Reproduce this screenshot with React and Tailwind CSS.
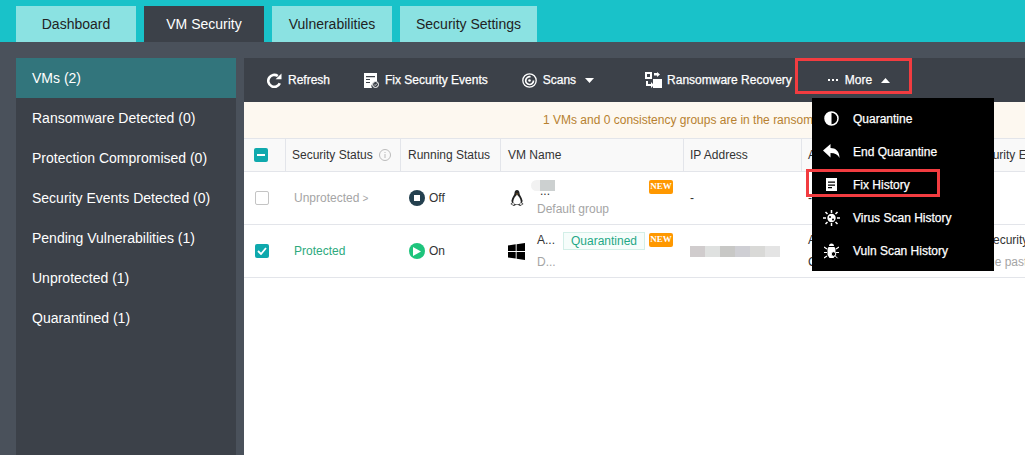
const tabs = ['Dashboard', 'VM Security', 'Vulnerabilities', 'Security Settings']
const sideItems = ['VMs (2)', 'Ransomware Detected (0)', 'Protection Compromised (0)', 'Security Events Detected (0)', 'Pending Vulnerabilities (1)', 'Unprotected (1)', 'Quarantined (1)']
const ipBlur = ['bg-[#d0cccd]', 'bg-[#dfe1e0]', 'bg-[#c8c8c6]', 'bg-[#cfcfd4]', 'bg-[#d9d9d7]', 'bg-[#e4e4e4]']

const Caret = ({ up }) => (
  <svg width="9" height="5" viewBox="0 0 9 5" className="ml-[9px]">
    <path d={up ? 'M4.5 0L9 5H0z' : 'M0 0h9L4.5 5z'} fill="#fff" />
  </svg>
)

const RefreshIcon = () => (
  <svg width="15" height="15" viewBox="0 0 15 15" fill="none">
    <path d="M12.8 10.2A6 6 0 1 1 10.8 3" stroke="#fff" strokeWidth="2.6" />
    <path d="M8.600 6.200h5.900V.4z" fill="#fff" />
  </svg>
)

const FixIcon = () => (
  <svg width="15" height="15" viewBox="0 0 15 15">
    <path d="M0 0h13v8.500a4.500 4.500 0 0 0-5 6.500H0z" fill="#fff" />
    <path d="M2 3h9v1.300H2zM2 6h4v1H2zM2 9h4v1H2z" fill="#3c4149" />
    <circle cx="11.500" cy="11.500" r="3" fill="none" stroke="#fff" />
    <path d="M10.200 11.500l1 1 1.700-1.800" fill="none" stroke="#fff" strokeWidth=".8" />
  </svg>
)

const ScanIcon = () => (
  <svg width="15" height="15" viewBox="0 0 15 15" fill="none" stroke="#fff">
    <circle cx="7.500" cy="7.500" r="6.700" strokeWidth="1.300" />
    <path d="M8.500 3.800a3.900 3.900 0 1 0 3 3.700" strokeWidth="1.700" />
    <circle cx="7.500" cy="7.500" r="1.300" fill="#fff" stroke="none" />
  </svg>
)

const RecoveryIcon = () => (
  <svg width="17" height="16" viewBox="0 0 17 16">
    <path d="M0 0h7v7H0z" fill="#fff" />
    <path d="M2 2h3v3H2z" fill="#3c4149" />
    <path d="M8 7h9v9H8z" fill="#fff" />
    <path d="M1 9h2v3h3v-2l3 3-3 3v-2H1z" fill="#fff" />
    <path d="M9 1h3V0l3 2.500L12 5V3.500H9z" fill="#fff" />
  </svg>
)

const PenguinIcon = () => (
  <svg width="14" height="16" viewBox="0 0 14 16">
    <path d="M7 0c1.700 0 2.500 1.400 2.500 3.200 0 1.800 2.400 4 3 7.300.2 1-.2 1.500-.7 1.700L13.500 14l-3.300 2-2-1H5.800l-2 1L.5 14l1.700-1.800c-.5-.2-.9-.8-.7-1.700.6-3.300 3-5.500 3-7.300C4.500 1.400 5.300 0 7 0z" fill="#222" />
    <path d="M7 4.800c1.400 1.200 3.700 4 3.700 6.700 0 1.900-1.700 3-3.700 3s-3.700-1.100-3.700-3C3.300 8.800 5.600 6 7 4.800z" fill="#fff" />
    <path d="M5.600 3.200L7 4l1.400-.8L7 4.700z" fill="#e9a23b" />
    <path d="M1.200 14l2.200-1.700 1 2.100-.9.800zM12.800 14l-2.200-1.700-1 2.100.9.800z" fill="#d8d8d8" />
  </svg>
)

const WindowsIcon = () => (
  <svg width="17" height="17" viewBox="0 0 17 17">
    <path d="M0 2.400l7.700-1.100v6.600H0zM8.600 1.200L17 0v7.900H8.600zM0 8.900h7.700v6.700L0 14.600zM8.600 8.900H17V17l-8.400-1.200z" fill="#000" />
  </svg>
)

const menu = [
  {
    label: 'Quarantine',
    icon: (
      <svg width="15" height="15" viewBox="0 0 15 15">
        <circle cx="7.500" cy="7.500" r="6.500" fill="#000" stroke="#fff" strokeWidth="1.500" />
        <path d="M7.500 1a6.500 6.500 0 0 0 0 13z" fill="#fff" />
      </svg>
    ),
  },
  {
    label: 'End Quarantine',
    icon: (
      <svg width="17" height="15" viewBox="0 0 17 15">
        <path d="M7.500 0v4c5 0 9 3 9 10-1.600-3.500-4.500-5-9-5v4.500L0 6.500z" fill="#fff" />
      </svg>
    ),
  },
  {
    label: 'Fix History',
    icon: (
      <svg width="17" height="13" viewBox="0 0 17 13">
        <path d="M3 0h11v13H3z" fill="#fff" />
        <path d="M5 3.500h7v1.200H5zM5 6.500h7v1.200H5zM5 9h4v1.200H5z" fill="#000" />
      </svg>
    ),
  },
  {
    label: 'Virus Scan History',
    icon: (
      <svg width="17" height="16" viewBox="0 0 17 16">
        <circle cx="8.500" cy="8" r="4.200" fill="#fff" />
        <path d="M8.500 0v3M8.500 13v3M0 8h3M14 8h3M2.500 2l2 2M14.500 2l-2 2M2.500 14l2-2M14.500 14l-2-2" stroke="#fff" strokeWidth="1.500" />
        <circle cx="7" cy="7" r="1" fill="#000" />
        <circle cx="10" cy="9.500" r="1" fill="#000" />
      </svg>
    ),
  },
  {
    label: 'Vuln Scan History',
    icon: (
      <svg width="15" height="16" viewBox="0 0 15 16">
        <path d="M4.500 4h6l1 2v6l-2 3h-4l-2-3V6zM5 3a2.500 2.500 0 0 1 5 0z" fill="#fff" />
        <path d="M3 6L0 4M12 6l3-2M3 9.500H0M12 9.500h3M3 13l-3 2" stroke="#fff" strokeWidth="1.200" />
        <circle cx="9.500" cy="11" r="2.300" fill="#000" stroke="#fff" />
        <path d="M11 12.700l2.500 2.500" stroke="#fff" />
      </svg>
    ),
  },
]

const HeadCell = ({ className, children }) => (
  <div className={`flex items-center border-r border-[#e3e5ea] text-[12px] text-[#333] whitespace-nowrap ${className}`}>{children}</div>
)

const NewBadge = () => (
  <span className="absolute left-[148px] top-[8px] flex h-[14px] w-6 items-center justify-center rounded-[2px] bg-[#ff9800] font-['Liberation_Serif',serif] text-[9px] font-bold text-white">NEW</span>
)

const rowGrid = 'grid grid-cols-[41px_115px_100px_183px_118px_170px_1fr]'
const toolText = '[-webkit-text-stroke:0.25px_#fff]'

export default function App() {
  return (
    <div className="relative h-[455px] w-[1025px] overflow-hidden bg-[#4a515b] font-['Liberation_Sans',Arial,sans-serif]">
      <div className="flex h-[42px] gap-2 bg-[#19c2c9] pl-4 pt-1.5">
        {tabs.map((tab, i) => (
          <div key={tab} className={`flex min-w-[120px] shrink-0 items-center justify-center whitespace-nowrap px-4 text-sm ${i === 1 ? 'bg-[#3c4149] text-white' : 'bg-[#8be2e2] text-[#222]'}`}>
            {tab}
          </div>
        ))}
      </div>

      <div className="flex h-[413px] gap-2 pl-4 pt-4">
        <div className="w-[220px] shrink-0 bg-[#3c4149]">
          {sideItems.map((item, i) => (
            <div key={item} className={`flex h-10 items-center whitespace-nowrap pl-4 text-sm text-white ${i === 0 ? 'bg-[#32757c]' : ''}`}>
              {item}
            </div>
          ))}
        </div>

        <div className="w-[781px] shrink-0 bg-white">
          <div className={`flex h-11 items-center whitespace-nowrap bg-[#3c4149] pl-[23px] text-[12px] text-white ${toolText}`}>
            <RefreshIcon />
            <span className="ml-1.5">Refresh</span>
            <span className="ml-[34px]"><FixIcon /></span>
            <span className="ml-1.5">Fix Security Events</span>
            <span className="ml-[34px]"><ScanIcon /></span>
            <span className="ml-1.5">Scans</span>
            <Caret />
            <span className="ml-[51px]"><RecoveryIcon /></span>
            <span className="ml-[5px]">Ransomware Recovery</span>
            <span className="ml-[36px] flex gap-[2px]">
              <span className="h-0.5 w-0.5 bg-white" />
              <span className="h-0.5 w-0.5 bg-white" />
              <span className="h-0.5 w-0.5 bg-white" />
            </span>
            <span className="ml-[7px]">More</span>
            <Caret up />
          </div>

          <div className="flex h-9 items-center whitespace-nowrap bg-[#fdf8f0] pl-[299px] text-[12px] text-[#b7812f]">
            1 VMs and 0 consistency groups are in the ransomware recovery state. You need to
          </div>

          <div className={`${rowGrid} h-[34px] border-y border-[#e3e5ea] bg-[#f9f9f9] pl-px`}>
            <HeadCell className="pl-[9px]">
              <span className="flex h-3.5 w-3.5 items-center justify-center rounded-[2px] bg-[#0fa9ad]">
                <span className="h-0.5 w-2 bg-white" />
              </span>
            </HeadCell>
            <HeadCell className="pl-1.5">
              Security Status
              <svg width="12" height="12" viewBox="0 0 12 12" className="ml-[6px]" fill="none">
                <circle cx="6" cy="6" r="5.500" stroke="#bbb" />
                <path d="M6 5v4M6 3v1" stroke="#bbb" />
              </svg>
            </HeadCell>
            <HeadCell className="pl-[7px]">Running Status</HeadCell>
            <HeadCell className="pl-[7px]">VM Name</HeadCell>
            <HeadCell className="pl-1.5">IP Address</HeadCell>
            <HeadCell className="pl-1.5">A</HeadCell>
            <HeadCell className="border-r-0">Security Events</HeadCell>
          </div>

          <div className={`${rowGrid} h-[53px] border-b border-[#e3e5ea] pl-px text-[12px]`}>
            <div className="flex items-center pl-2.5">
              <span className="h-3.5 w-3.5 rounded-[2px] border border-[#c4c4c4] bg-white" />
            </div>
            <div className="flex items-center whitespace-nowrap pl-2 text-[#a5a5a5]">
              Unprotected<span className="ml-[3px] text-[10px]">&gt;</span>
            </div>
            <div className="flex items-center pl-2 text-[#333]">
              <span className="flex h-4 w-4 items-center justify-center rounded-full bg-[#24404f]">
                <span className="h-1.5 w-1.5 bg-white" />
              </span>
              <span className="ml-[4px]">Off</span>
            </div>
            <div className="relative flex items-center pl-[9px]">
              <PenguinIcon />
              <div className="ml-[13px] flex flex-col">
                <span className="relative h-[15px] w-[18px] self-start leading-[22px] text-[#333]">
                  <span className="absolute -left-[6px] top-0 h-[11px] w-2.5 rounded-l-full bg-[#f2f2f2]" />
                  <span className="absolute left-[3px] top-0 h-[11px] w-[15px] bg-[#ccd0d0]" />
                  <span className="relative left-[3px]">...</span>
                </span>
                <span className="mt-[7px] leading-[15px] text-[#a5a5a5]">Default group</span>
              </div>
              <NewBadge />
            </div>
            <div className="flex items-center pl-1.5 text-[#333]">-</div>
            <div className="flex items-center pl-1.5 text-[#333]">-</div>
            <div />
          </div>

          <div className={`${rowGrid} h-[53px] border-b border-[#e3e5ea] pl-px text-[12px]`}>
            <div className="flex items-center pl-2.5">
              <span className="flex h-3.5 w-3.5 items-center justify-center rounded-[2px] bg-[#0fa9ad]">
                <svg width="10" height="8" viewBox="0 0 10 8" fill="none">
                  <path d="M1 4l3 3 5-6" stroke="#fff" strokeWidth="1.800" />
                </svg>
              </span>
            </div>
            <div className="flex items-center pl-2 text-[#2eaa7d]">Protected</div>
            <div className="flex items-center pl-2 text-[#333]">
              <span className="flex h-4 w-4 items-center justify-center rounded-full bg-[#1ec47c]">
                <svg width="8" height="9" viewBox="0 0 8 9"><path d="M0 0l8 4.500L0 9z" fill="#fff" /></svg>
              </span>
              <span className="ml-[4px]">On</span>
            </div>
            <div className="relative flex items-center pl-[7px]">
              <WindowsIcon />
              <div className="ml-3 flex flex-col">
                <span className="leading-[15px] text-[#333]">A...</span>
                <span className="mt-[7px] leading-[15px] text-[#a5a5a5]">D...</span>
              </div>
              <span className="absolute left-[62px] top-[7px] flex h-[18px] w-[82px] items-center justify-center border border-[#d3efe8] bg-[#f6fdfb] text-[#1fa886]">Quarantined</span>
              <NewBadge />
            </div>
            <div className="flex items-center pl-1.5">
              {ipBlur.map((c) => (
                <span key={c} className={`h-[11px] w-[15px] ${c}`} />
              ))}
            </div>
            <div className="flex flex-col justify-center pl-1.5 text-[#333]">
              <span>A</span>
              <span className="mt-1">C</span>
            </div>
            <div className="flex flex-col justify-center whitespace-nowrap">
              <span className="pl-[13px] text-[#333]">Security</span>
              <span className="mt-1 text-[#a5a5a5]">in the past</span>
            </div>
          </div>
        </div>
      </div>

      <div className={`absolute left-[812px] top-[98px] w-[182px] bg-black pb-1 pt-1 ${toolText}`}>
        {menu.map((m) => (
          <div key={m.label} className="flex h-[33px] items-center whitespace-nowrap pl-[11px] text-[12px] text-white">
            <span className="flex w-[17px] justify-center">{m.icon}</span>
            <span className="ml-[13px]">{m.label}</span>
          </div>
        ))}
      </div>

      <div className="absolute left-[795px] top-[58px] h-[36px] w-[117px] border-[3px] border-[#f23c40]" />
      <div className="absolute left-[806px] top-[169px] h-[28px] w-[134px] border-[3px] border-[#f23c40]" />
    </div>
  )
}
